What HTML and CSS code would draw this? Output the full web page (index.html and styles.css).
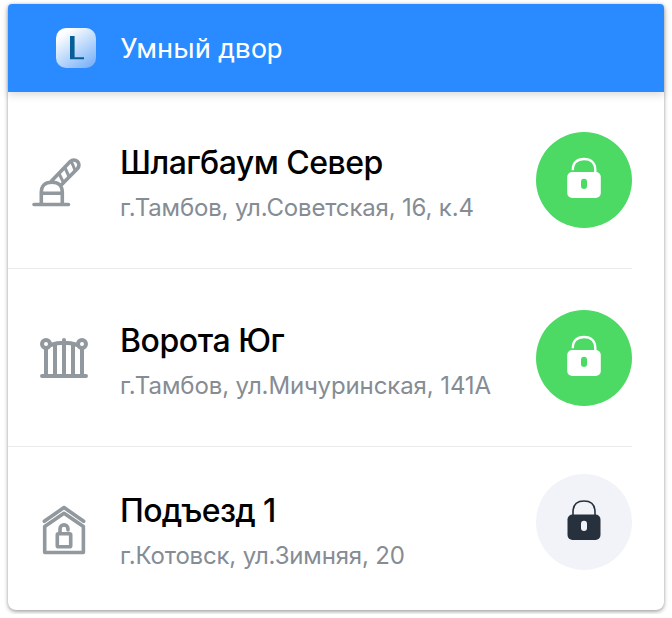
FILE: index.html
```
<!DOCTYPE html>
<html lang="ru">
<head>
<meta charset="utf-8">
<title>Умный двор</title>
<link rel="stylesheet" href="styles.css">
</head>
<body>
<main class="card">
  <header class="header">
    <span class="logo"><svg viewBox="0 0 40 40" width="40" height="40"><path d="M14 8h4.600v21.300h9.400v2H14z" fill="#055f96"/></svg></span>
    <h1 class="brand">Умный двор</h1>
  </header>
  <section class="row">
    <svg class="icon" viewBox="0 0 64 64">
      <path d="M2 56.500H36.500M9.300 56V45C9.300 37 13 34.200 19.900 34.200S30.300 37 30.300 45V56M9.300 45.300H30.300M19.300 33.300L38 13.800C42.800 8.800 50.300 15.500 45.300 20.800L29.500 36.800"/>
      <path class="stripes" d="M27.500 26.500L31.500 34.500M33.300 20.500L37 28.500M39.800 14.500L43.200 22.500"/>
    </svg>
    <div class="info"><h2 class="title north">Шлагбаум Север</h2><p class="address soviet">г.Тамбов, ул.Советская, 16, к.4</p></div>
    <button class="lock open" aria-label="Закрыть"><svg viewBox="0 0 96 96"><path class="shackle" d="M36.800 38.200C36.600 31 41 27 48 27S59.300 31 59.300 38V42"/><rect class="case" x="31.200" y="40" width="33.600" height="26" rx="5"/><rect class="hole" x="45" y="46.700" width="6" height="10.300" rx="3"/></svg></button>
  </section>
  <section class="row">
    <svg class="icon gate" viewBox="0 0 64 64">
      <path d="M10 50H54M14 23V50M23 18.500V50M32 14V50M41 18.500V50M50 23V50M18.500 19Q32 14.500 45.500 19"/><circle cx="14" cy="18" r="4"/><circle cx="50" cy="18" r="4"/>
    </svg>
    <div class="info"><h2 class="title south">Ворота Юг</h2><p class="address michurin">г.Тамбов, ул.Мичуринская, 141А</p></div>
    <button class="lock open" aria-label="Закрыть"><svg viewBox="0 0 96 96"><path class="shackle" d="M36.800 38.200C36.600 31 41 27 48 27S59.300 31 59.300 38V42"/><rect class="case" x="31.200" y="40" width="33.600" height="26" rx="5"/><rect class="hole" x="45" y="46.700" width="6" height="10.300" rx="3"/></svg></button>
  </section>
  <section class="row last">
    <svg class="icon" viewBox="0 0 64 64">
      <path d="M12.300 23.300L32 9.500L51.700 23.300M12.700 54.500V28.500L32 15.300L51.400 28.500V54.500ZM28 35V31C28 25.500 36 25.500 36 31V32"/><rect x="25.300" y="35.800" width="13.400" height="13" rx="1"/>
    </svg>
    <div class="info"><h2 class="title entrance">Подъезд 1</h2><p class="address winter">г.Котовск, ул.Зимняя, 20</p></div>
    <button class="lock closed" aria-label="Открыть"><svg viewBox="0 0 96 96"><path class="shackle" d="M37 42V38C37 31 41 27 48 27S59 31 59 38V42"/><rect class="case" x="31.500" y="40.500" width="33" height="25.500" rx="5"/><rect class="hole" x="45" y="46.700" width="6" height="10.300" rx="3"/></svg></button>
  </section>
</main>
</body>
</html>
```
FILE: styles.css
```
* { box-sizing: border-box; }
body { margin: 0; padding: 4px 8px; background: #fff; overflow: hidden; }
h1, h2, p { margin: 0; white-space: nowrap; }
.card {
  height: 606px;
  border-radius: 4px 4px 8px 8px;
  background: #fff;
  box-shadow: 0 2px 4px rgba(0, 0, 0, .32), 0 0 3px rgba(0, 0, 0, .12);
}
.header {
  display: flex;
  align-items: center;
  height: 88px;
  padding: 1px 0 0 48px;
  border-radius: 4px 4px 0 0;
  background: #298bff;
  box-shadow: 0 3px 8px rgba(0, 0, 0, .15);
}
.logo {
  width: 40px;
  height: 40px;
  margin: -1px 24px 0 0;
  border-radius: 10px;
  background: linear-gradient(145deg, #fff 15%, #6eabf8 100%);
}
.logo svg { display: block; }
.brand {
  padding-top: 1px;
  font: 400 28px/40px Roboto, sans-serif;
  color: #fff;
}
.row {
  display: flex;
  align-items: flex-start;
  height: 177px;
  margin-right: 32px;
  padding: 40px 0 0 24px;
  border-bottom: 1px solid #ebebec;
}
.row + .row { height: 178px; padding-top: 41px; }
.row.last { height: 163px; padding-top: 27px; border: 0; }
.icon {
  width: 64px;
  height: 64px;
  margin: 16px 25px 0 0;
  fill: none;
  stroke: #91989e;
  stroke-width: 3.6;
  stroke-linecap: round;
  stroke-linejoin: round;
}
.gate { stroke-width: 4; }
.stripes { stroke-width: 3; }
.last .icon { margin-top: 24px; }
.info { flex: 1; padding-top: 10px; }
.last .info { padding-top: 16px; }
.title {
  margin-left: -1px;
  font: 500 32px/42px Inter, sans-serif;
  color: #000;
}
.north { letter-spacing: -.5px; }
.south { letter-spacing: -.45px; }
.entrance { letter-spacing: -.7px; }
.address {
  margin: 9px 0 0 -1px;
  font: 400 24px/30px Inter, sans-serif;
  color: #858c94;
}
.soviet { letter-spacing: -.17px; }
.michurin { letter-spacing: -.1px; }
.winter { letter-spacing: -.17px; }
.lock {
  flex: none;
  width: 96px;
  height: 96px;
  padding: 0;
  border: 0;
  border-radius: 50%;
}
.lock svg { display: block; width: 96px; height: 96px; }
.shackle { fill: none; stroke-width: 2.4; }
.open { background: #4cd964; }
.open .shackle { stroke: #fff; }
.open .case { fill: #fff; }
.open .hole { fill: #4cd964; }
.closed { background: #f2f3f9; }
.closed .shackle { stroke: #27313d; stroke-width: 1.6; }
.closed .case { fill: #27313d; }
.closed .hole { fill: #f2f3f9; }
```
